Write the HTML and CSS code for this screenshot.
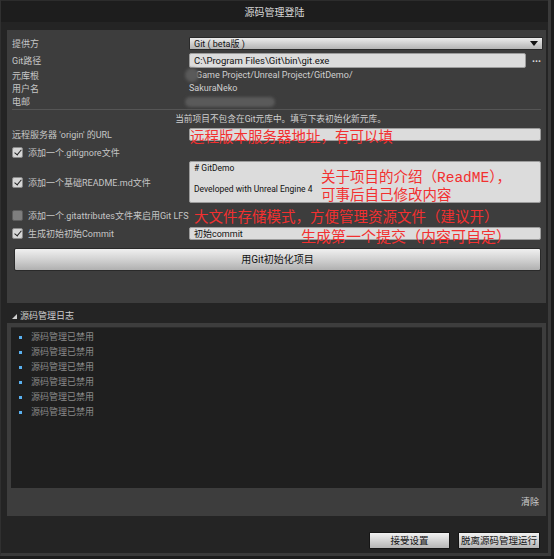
FILE: index.html
```html
<!DOCTYPE html>
<html lang="zh-CN">
<head>
<meta charset="utf-8">
<title>源码管理登陆</title>
<link rel="stylesheet" href="styles.css">
</head>
<body>
<div class="window">
  <div class="titlebar">源码管理登陆</div>
  <div class="content">
    <div class="panel">
      <div class="row r-provider">
        <div class="label">提供方</div>
        <div class="dropdown"><span>Git ( beta版 )</span><span class="caret"></span></div>
      </div>
      <div class="row r-path">
        <div class="label">Git路径</div>
        <div class="input path">C:\Program Files\Git\bin\git.exe</div>
        <div class="dots">···</div>
      </div>
      <div class="row r-info">
        <div class="label">元库根</div>
        <div class="value"><span class="blur blur-round"></span><span class="root">Game Project/Unreal Project/GitDemo/</span></div>
      </div>
      <div class="row r-info">
        <div class="label">用户名</div>
        <div class="value">SakuraNeko</div>
      </div>
      <div class="row r-info">
        <div class="label">电邮</div>
        <div class="value"><span class="blur blur-mail"></span></div>
      </div>
      <div class="sep"></div>
      <div class="notice">当前项目不包含在Git元库中。填写下表初始化新元库。</div>
      <div class="row r-url">
        <div class="label">远程服务器 'origin' 的URL</div>
        <div class="input"></div>
      </div>
      <div class="row r-check">
        <div class="check-label"><span class="checkbox on"></span>添加一个.gitignore文件</div>
      </div>
      <div class="row r-readme">
        <div class="check-label"><span class="checkbox on"></span>添加一个基础README.md文件</div>
        <div class="input textarea"><div># GitDemo</div><div class="gap-line">Developed with Unreal Engine 4</div></div>
      </div>
      <div class="row r-check r-lfs">
        <div class="check-label"><span class="checkbox off"></span>添加一个.gitattributes文件来启用Git LFS</div>
      </div>
      <div class="row r-commit">
        <div class="check-label"><span class="checkbox on"></span>生成初始初始Commit</div>
        <div class="input">初始commit</div>
      </div>
      <div class="big-button">用Git初始化项目</div>

      <div class="annot a-url">远程版本服务器地址，有可以填</div>
      <div class="annot a-readme"><div>关于项目的介绍（<span class="mono">ReadME</span>），</div><div>可事后自己修改内容</div></div>
      <div class="annot a-lfs">大文件存储模式，方便管理资源文件（建议开）</div>
      <div class="annot a-commit">生成第一个提交（内容可自定）</div>
    </div>

    <div class="log-header"><span class="tri"></span>源码管理日志</div>
    <div class="log-panel">
      <div class="log-box">
        <div class="log-item">源码管理已禁用</div>
        <div class="log-item">源码管理已禁用</div>
        <div class="log-item">源码管理已禁用</div>
        <div class="log-item">源码管理已禁用</div>
        <div class="log-item">源码管理已禁用</div>
        <div class="log-item">源码管理已禁用</div>
      </div>
      <div class="log-footer"><span>清除</span></div>
    </div>

    <div class="footer">
      <div class="btn btn-accept">接受设置</div>
      <div class="btn btn-leave">脱离源码管理运行</div>
    </div>
  </div>
</div>
</body>
</html>
```
FILE: styles.css
```css
html, body {
  margin: 0;
  padding: 0;
  background: #1c1c1c;
}
body {
  width: 554px;
  height: 559px;
  overflow: hidden;
  font-family: Roboto, "Noto Sans CJK SC", sans-serif;
  font-size: 9px;
  color: #c9c9c9;
}
.window {
  width: 547px;
  height: 553px;
  background: #242424;
  border-left: 1px solid #303030;
  border-right: 3px solid #3a3a3a;
  border-bottom: 3px solid #3a3a3a;
  display: flex;
  flex-direction: column;
}
.titlebar {
  height: 22px;
  line-height: 24px;
  text-align: center;
  font-size: 10px;
  color: #d8d8d8;
  background: #1d1d1d;
  border-top: 1px solid #2c2c2c;
  box-sizing: border-box;
}
.content {
  padding: 8px 2px 0 6px;
  display: flex;
  flex-direction: column;
}
.panel {
  position: relative;
  height: 273px;
  box-sizing: border-box;
  background: #3d3d3d;
  padding: 7px 5px 0 5px;
  display: flex;
  flex-direction: column;
}
.row {
  display: flex;
  align-items: center;
}
.label {
  width: 177px;
  flex: none;
  color: #c6c6c6;
}
.r-provider { height: 13px; }
.dropdown {
  flex: 1;
  height: 13px;
  box-sizing: border-box;
  margin-right: -2px;
  border: 1px solid #2a2a2a;
  border-radius: 1px;
  background: linear-gradient(#ececec, #c9c9c9 60%, #b4b4b4);
  color: #111;
  display: flex;
  align-items: center;
  justify-content: space-between;
  padding: 0 4px 0 4px;
  font-size: 9px;
}
.caret {
  width: 0;
  height: 0;
  border-left: 4px solid transparent;
  border-right: 4px solid transparent;
  border-top: 5px solid #111;
}
.r-path { height: 15px; margin-top: 3px; }
.input {
  flex: 1;
  height: 13px;
  box-sizing: border-box;
  background: #dcdcdc;
  border: 1px solid #9c9c9c;
  border-radius: 2px;
  color: #111;
  padding: 0 4px;
  display: flex;
  align-items: center;
}
.input.path {
  height: 15px;
  font-size: 9.5px;
}
.dots {
  width: 15px;
  text-align: right;
  font-weight: bold;
  color: #e0e0e0;
  font-size: 10px;
  padding-top: 2px;
}
.r-info { height: 12px; margin-top: 1px; }
.value { display: flex; align-items: center; color: #cfcfcf; }
.root { margin-left: -3px; }
.blur {
  display: inline-block;
  background: #5a5a5a;
  filter: blur(1.5px);
}
.blur-round {
  width: 14px;
  height: 14px;
  border-radius: 50%;
  margin-left: -4px;
}
.blur-mail {
  width: 90px;
  height: 10px;
  border-radius: 5px;
  margin-left: -4px;
  margin-top: 2px;
}
.sep {
  height: 1px;
  background: #555;
  margin-top: 2px;
}
.notice {
  height: 12px;
  margin-top: 3px;
  text-align: center;
  line-height: 12px;
  color: #cfcfcf;
  padding-left: 8px;
  font-size: 8.7px;
}
.r-url { height: 13px; margin-top: 3px; }
.r-check { height: 14px; margin-top: 4px; }
.r-lfs { margin-top: 5px; }
.check-label {
  width: 177px;
  flex: none;
  display: flex;
  align-items: center;
  color: #c6c6c6;
}
.checkbox {
  width: 11px;
  height: 11px;
  box-sizing: border-box;
  border-radius: 2px;
  margin-right: 5px;
  position: relative;
  flex: none;
}
.checkbox.on {
  background: #d6d6d6;
  border: 1px solid #8a8a8a;
}
.checkbox.on::after {
  content: "";
  position: absolute;
  left: 3px;
  top: 0px;
  width: 3px;
  height: 6px;
  border-right: 1.5px solid #222;
  border-bottom: 1.5px solid #222;
  transform: rotate(40deg);
}
.checkbox.off {
  background: #7e7e7e;
  border: 1px solid #5c5c5c;
}
.r-readme { height: 42px; margin-top: 2px; }
.textarea {
  height: 42px;
  flex-direction: column;
  align-items: flex-start;
  justify-content: flex-start;
  padding: 1px 4px;
  font-size: 8.5px;
  line-height: 10px;
}
.gap-line { margin-top: 11px; }
.r-commit { height: 13px; margin-top: 5px; }
.big-button {
  height: 23px;
  margin-top: 8px;
  box-sizing: border-box;
  border: 1px solid #2a2a2a;
  border-radius: 2px;
  background: linear-gradient(#f0f0f0, #d2d2d2 50%, #b0b0b0);
  color: #111;
  text-align: center;
  line-height: 21px;
  font-size: 10px;
  margin-left: 2px;
}
.annot {
  position: absolute;
  color: #f23030;
  font-family: "Noto Sans CJK SC", sans-serif;
  font-size: 14.5px;
  line-height: 14px;
  white-space: nowrap;
}
.mono { font-family: "Liberation Mono", monospace; }
.a-url { left: 183px; top: 99px; }
.a-readme { left: 314px; top: 138px; line-height: 15px; }
.a-lfs { left: 187px; top: 179px; }
.a-commit { left: 294px; top: 199px; font-size: 15px; }

.log-header {
  height: 20px;
  box-sizing: border-box;
  padding: 6px 0 0 5px;
  display: flex;
  align-items: center;
  color: #cfcfcf;
  line-height: 12px;
}
.tri {
  width: 0;
  height: 0;
  border-left: 5px solid transparent;
  border-bottom: 5px solid #d0d0d0;
  margin-right: 3px;
  margin-top: 1px;
}
.log-panel {
  height: 193px;
  box-sizing: border-box;
  background: #3d3d3d;
  padding: 4px 4px 0 4px;
  display: flex;
  flex-direction: column;
}
.log-box {
  height: 161px;
  box-sizing: border-box;
  background: #1f1f1f;
  border-top: 1px solid #2a2a2a;
  padding: 2px 0 0 8px;
}
.log-item {
  height: 15px;
  line-height: 15px;
  color: #8a8a8a;
  display: flex;
  align-items: center;
}
.log-item::before {
  content: "";
  width: 3px;
  height: 3px;
  background: #5ab0f0;
  margin-right: 9px;
  margin-left: 0;
}
.log-footer {
  flex: 1;
  display: flex;
  align-items: center;
  justify-content: flex-end;
  padding-right: 3px;
  padding-bottom: 2px;
  color: #cfcfcf;
  font-size: 9px;
}
.footer {
  display: flex;
  justify-content: flex-end;
  gap: 8px;
  margin-top: 16px;
  padding-right: 6px;
}
.btn {
  height: 17px;
  box-sizing: border-box;
  border: 1px solid #151515;
  border-radius: 1px;
  background: linear-gradient(#f2f2f2, #d0d0d0 55%, #b5b5b5);
  color: #151515;
  text-align: center;
  line-height: 15px;
  font-size: 9.5px;
}
.btn-accept { width: 81px; }
.btn-leave { width: 82px; }
```
